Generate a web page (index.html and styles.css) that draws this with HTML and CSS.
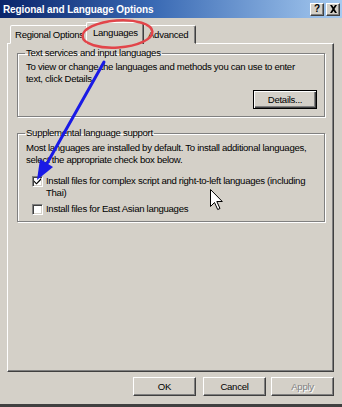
FILE: index.html
```html
<!DOCTYPE html>
<html>
<head>
<meta charset="utf-8">
<link rel="stylesheet" href="styles.css">
</head>
<body>
<div class="window">
  <div class="titlebar">
    <span class="title">Regional and Language Options</span>
    <div class="tbtns">
      <span class="tbtn help">?</span>
      <span class="tbtn close"><svg width="9" height="8" viewBox="0 0 9 8"><path d="M1 0h2l1.5 2.2L6 0h2L5.5 4 8 8H6L4.5 5.8 3 8H1l2.5-4z" fill="#000"/></svg></span>
    </div>
  </div>
  <div class="content">
    <div class="tabs">
      <div class="tab t1"><span>Regional Options</span></div>
      <div class="tab sel">Languages</div>
      <div class="tab t3">Advanced</div>
    </div>
    <div class="panel">
      <fieldset class="group g1">
        <legend>Text services and input languages</legend>
        <p class="txt">To view or change the languages and methods you can use to enter<br>text, click Details.</p>
        <div class="right"><span class="btn">Details...</span></div>
      </fieldset>
      <fieldset class="group g2">
        <legend>Supplemental language support</legend>
        <p class="txt">Most languages are installed by default. To install additional languages,<br>select the appropriate check box below.</p>
        <div class="check c1">
          <span class="box"><svg width="7" height="7" viewBox="0 0 7 7"><path d="M0 2.5l2.5 2.5L7 0v2L2.5 6.5 0 4z" fill="#000"/></svg></span>
          <span class="ctext">Install files for complex script and right-to-left languages (including<br>Thai)</span>
        </div>
        <div class="check c2">
          <span class="box"></span>
          <span class="ctext">Install files for East Asian languages</span>
        </div>
      </fieldset>
    </div>
    <div class="buttons">
      <span class="btn wide ok">OK</span>
      <span class="btn wide cancel">Cancel</span>
      <span class="btn wide disabled">Apply</span>
    </div>
  </div>
  <svg class="overlay" width="342" height="407" viewBox="0 0 342 407">
    <ellipse cx="117.5" cy="34" rx="35" ry="13.5" transform="rotate(-4 117.5 34)" fill="none" stroke="#e2454a" stroke-width="2.5"/>
    <line x1="104" y1="62" x2="45" y2="167" stroke="#1a1ae6" stroke-width="3" stroke-linecap="round"/>
    <polygon points="37,180 53,167 40,159" fill="#1a1ae6"/>
    <path d="M210.5 189.5v17l4-4 3.2 7 2.3-1-3.2-7h5.5z" fill="#fff" stroke="#000" stroke-width="1" stroke-linejoin="round"/>
  </svg>
</div>
</body>
</html>
```

FILE: styles.css
```css
* { box-sizing: border-box; }
html, body { margin: 0; padding: 0; }
body {
  width: 342px;
  height: 407px;
  overflow: hidden;
  background: #d4d0c8;
  font-family: "Liberation Sans", Arial, sans-serif;
  font-size: 9.6px;
  letter-spacing: -0.3px;
  color: #000;
}
.window {
  position: relative;
  width: 342px;
  height: 407px;
  background: #d4d0c8;
  border-bottom: 3px solid #404040;
  display: flex;
  flex-direction: column;
}
.titlebar {
  height: 18px;
  background: linear-gradient(to right, #0a246a 0%, #3a6ab4 45%, #a6caf0 100%);
  display: flex;
  align-items: center;
  justify-content: space-between;
  padding: 0 2px 0 3px;
}
.title {
  color: #fff;
  font-weight: bold;
  font-size: 10px;
  letter-spacing: -0.1px;
}
.tbtns { display: flex; gap: 2px; }
.tbtn {
  width: 14px;
  height: 13px;
  background: #d4d0c8;
  border: 1px solid;
  border-color: #fff #404040 #404040 #fff;
  box-shadow: inset -1px -1px 0 #808080;
  display: flex;
  align-items: center;
  justify-content: center;
  font-weight: bold;
  font-size: 10px;
  line-height: 1;
  letter-spacing: 0;
}
.content {
  flex: 1;
  display: flex;
  flex-direction: column;
  padding: 5px 0 0 7px;
}
.tabs {
  display: flex;
  height: 21px;
  padding-left: 3px;
  align-items: flex-end;
  position: relative;
  z-index: 1;
}
.tab {
  height: 19px;
  border: 1px solid;
  border-color: #fff #404040 transparent #fff;
  border-radius: 2px 2px 0 0;
  box-shadow: inset -1px 0 0 #808080;
  padding: 3px 4px 0 4px;
  white-space: nowrap;
  overflow: hidden;
  background: #d4d0c8;
}
.t1 { width: 78px; }
.tab.sel {
  height: 22px;
  width: 58px;
  margin-left: -2px;
  margin-right: -1px;
  padding: 4px 0 0 6px;
  position: relative;
  z-index: 2;
  border-bottom: none;
}
.t3 { width: 53px; padding-left: 4px; }
.panel {
  width: 327px;
  height: 329px;
  margin-top: -1px;
  border: 1px solid;
  border-color: #fff #404040 #404040 #fff;
  box-shadow: inset -1px -1px 0 #808080;
  padding: 3px 8px 0 9px;
  display: flex;
  flex-direction: column;
  gap: 10px;
}
.group {
  margin: 0;
  padding: 0 7px 0 8px;
  min-width: 0;
  border: 1px solid #808080;
  box-shadow: inset 1px 1px 0 #fff, 1px 1px 0 #fff;
}
.group legend {
  padding: 0 1px;
  margin-left: -1px;
  line-height: 12px;
}
.txt {
  margin: 2px 0 0 0;
  line-height: 11.5px;
  white-space: nowrap;
}
.right {
  display: flex;
  justify-content: flex-end;
  margin-top: 6px;
  margin-bottom: 7px;
}
.btn {
  display: inline-flex;
  align-items: center;
  justify-content: center;
  width: 64px;
  height: 19px;
  border: 1px solid;
  border-color: #fff #404040 #404040 #fff;
  box-shadow: inset -1px -1px 0 #808080;
  background: #d4d0c8;
}
.g1 .btn {
  border: 1px solid #000;
  box-shadow: inset 1px 1px 0 #fff, inset -1px -1px 0 #404040, inset -2px -2px 0 #808080;
}
.g2 .txt { line-height: 12px; margin-top: 3px; }
.check {
  display: flex;
  align-items: flex-start;
  gap: 3px;
  padding-left: 6px;
}
.c1 { margin-top: 9px; }
.c2 { margin-top: 4px; margin-bottom: 6px; }
.box {
  width: 11px;
  height: 11px;
  margin-top: 1px;
  flex: none;
  background: #fff;
  border: 1px solid;
  border-color: #808080 #fff #fff #808080;
  box-shadow: inset 1px 1px 0 #404040, inset -1px -1px 0 #d4d0c8;
  display: flex;
  align-items: center;
  justify-content: center;
}
.ctext { line-height: 12px; white-space: nowrap; }
.buttons {
  display: flex;
  justify-content: flex-end;
  padding-right: 8px;
  margin-top: 5px;
}
.btn.wide { width: 63px; }
.btn.ok { margin-right: 7px; }
.btn.cancel { margin-right: 5px; }
.btn.disabled {
  color: #808080;
  text-shadow: 1px 1px 0 #fff;
}
.overlay {
  position: absolute;
  left: 0;
  top: 0;
  z-index: 10;
  pointer-events: none;
}
```
